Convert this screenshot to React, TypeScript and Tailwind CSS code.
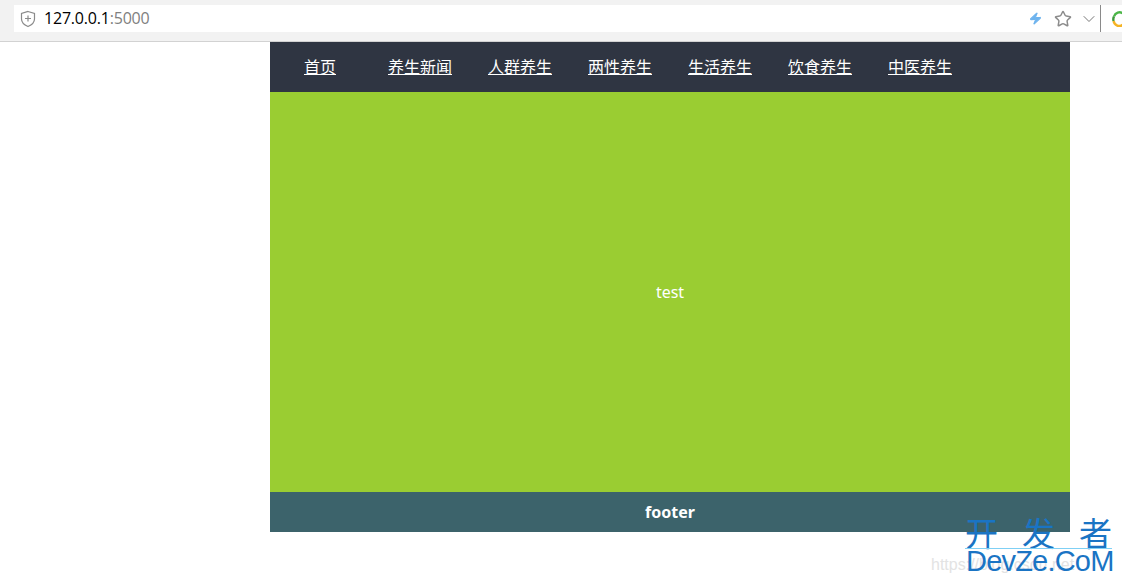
import { Star, ChevronDown, Zap } from 'lucide-react';

const navItems = ['首页', '养生新闻', '人群养生', '两性养生', '生活养生', '饮食养生', '中医养生'];

const cjk = "font-['Noto_Sans','Noto_Sans_CJK_SC',sans-serif]";

function AddressBar() {
  return (
    <div className="h-[42px] bg-[#f2f2f2] border-b border-[#d2d2d2] pt-[5px] pl-[14px] overflow-hidden">
      <div className="h-[27px] bg-white flex items-center pl-[6px] overflow-hidden">
        <svg width="16" height="18" viewBox="0 0 16 18" fill="none" stroke="#8a8a8a" strokeWidth="1.2">
          <path d="M8 1.5 L14.5 3.5 V9 C14.5 12.5 11.5 15 8 16.5 C4.5 15 1.5 12.5 1.5 9 V3.5 Z" />
          <path d="M8 5.5 V11.5 M5 8.5 H11" />
        </svg>
        <span className="ml-[8px] text-[16px] leading-[27px] text-black font-['Open_Sans','Liberation_Sans',sans-serif] tracking-[-0.2px]">
          127.0.0.1<span className="text-[#808080]">:5000</span>
        </span>
        <div className="ml-auto -mr-[1px] flex items-center h-full">
          <Zap size={13} className="text-[#6db3ee] fill-[#6db3ee] -skew-x-6" />
          <Star size={18} strokeWidth={2} className="text-[#8c8c8c] ml-[12px]" />
          <ChevronDown size={20} strokeWidth={1.2} className="text-[#777777] ml-[7px]" />
          <div className="w-px h-[27px] bg-[#8a8a8a] ml-[1px]" />
          <svg width="11" height="16" viewBox="0 0 11 16" fill="none" strokeWidth="2.4" className="ml-[11px]">
            <path d="M11 2.4 A 5.8 5.8 0 0 0 2 5.5" stroke="#4cb648" />
            <path d="M2 5.5 A 5.8 5.8 0 0 0 1.6 10" stroke="#3d9a3c" />
            <path d="M1.6 10 A 5.8 5.8 0 0 0 11 13.6" stroke="#f5b324" />
          </svg>
        </div>
      </div>
    </div>
  );
}

function Watermark() {
  return (
    <div className="absolute left-[931px] top-[517px] w-[191px] h-[60px]">
      <div className="absolute left-0 top-[39px] text-[16px] leading-[18px] text-[#e3e3e3] font-['Liberation_Sans',sans-serif] whitespace-nowrap">
        https://blog.csdn.net
      </div>
      <div className="absolute left-[34px] top-[-2px] w-[147px] flex justify-between text-[33px] leading-[34px] text-[#1a74c4] font-['Noto_Sans_CJK_SC',sans-serif] font-normal">
        <span>开</span>
        <span>发</span>
        <span>者</span>
      </div>
      <div className="absolute left-[34px] top-[31px] w-[147px] h-px bg-[#7fd0f5]" />
      <div className="absolute left-[35px] top-[27px] text-[29px] leading-[34px] tracking-[-0.8px] text-[#1a74c4] font-['Liberation_Sans',sans-serif] whitespace-nowrap">
        DevZe.CoM
      </div>
    </div>
  );
}

export default function App() {
  return (
    <div className="relative w-[1122px] h-[583px] bg-white overflow-hidden">
      <AddressBar />
      <div className="ml-[270px] w-[800px]">
        <nav className="h-[50px] bg-[#2f3542] flex items-center">
          {navItems.map((item) => (
            <a
              key={item}
              href="#"
              className={`w-[100px] text-center text-[16px] text-white underline ${cjk}`}
            >
              {item}
            </a>
          ))}
        </nav>
        <main className={`h-[400px] bg-[#9acd32] flex items-center justify-center text-[16px] text-white ${cjk}`}>
          test
        </main>
        <footer className={`h-[40px] bg-[#3c636b] flex items-center justify-center text-[16px] font-bold text-white ${cjk}`}>
          footer
        </footer>
      </div>
      <Watermark />
    </div>
  );
}
